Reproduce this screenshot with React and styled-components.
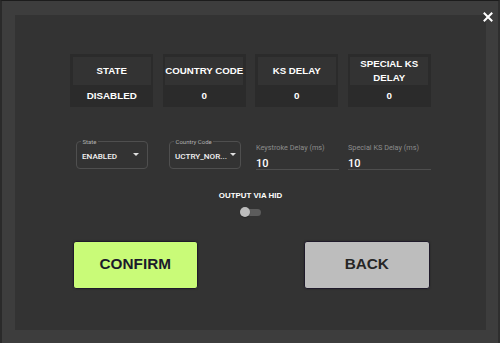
import styled, { createGlobalStyle } from "styled-components";

const Global = createGlobalStyle`
  html, body {
    margin: 0;
    padding: 0;
    background: #3c3c3c;
  }
  * { box-sizing: border-box; }
`;

const Modal = styled.div`
  position: relative;
  width: 500px;
  height: 343px;
  background: #3d3d3d;
  border-top: 1px solid #1c1c1c;
  border-left: 2px solid #2a2a2a;
  border-right: 2px solid #2e2e2e;
  padding: 14px 12px 13px 13px;
  font-family: "Liberation Sans", Arial, sans-serif;
`;

const CloseBtn = styled.div`
  position: absolute;
  top: 7px;
  right: 5px;
  width: 10px;
  height: 10px;
  cursor: pointer;
`;

const Panel = styled.div`
  background: #333333;
  width: 100%;
  height: 100%;
  display: flex;
  flex-direction: column;
  align-items: center;
  padding-top: 39px;
`;

const Table = styled.div`
  display: flex;
  gap: 9.5px;
`;

const Column = styled.div`
  width: 83px;
  height: 53px;
  background: #2b2b2b;
  padding: 2.5px 2.5px 0;
  display: flex;
  flex-direction: column;
`;

const HeadCell = styled.div`
  height: 28px;
  background: #333333;
  color: #ffffff;
  font-weight: bold;
  font-size: 9.7px;
  line-height: 14px;
  display: flex;
  align-items: center;
  justify-content: center;
  text-align: center;
  padding: 0 4px;
  white-space: ${p => (p.$wrap ? "normal" : "nowrap")};
`;

const ValueCell = styled.div`
  flex: 1;
  color: #ffffff;
  font-weight: bold;
  font-size: 9.8px;
  display: flex;
  align-items: center;
  justify-content: center;
  padding-bottom: 1px;
`;

const FormRow = styled.div`
  display: flex;
  margin-top: 33.5px;
  margin-left: 6px;
`;

const SelectBox = styled.div`
  position: relative;
  width: 72px;
  height: 28.6px;
  border: 1px solid #4f4f4f;
  border-radius: 4px;
  margin-right: ${p => p.$mr}px;
  display: flex;
  align-items: center;
  padding: 2px 8px 0 5px;
  font-family: Roboto, "Liberation Sans", sans-serif;
`;

const SelectLabel = styled.span`
  position: absolute;
  top: -4px;
  left: 4px;
  padding: 0 1.5px;
  background: #333333;
  color: #b0b0b0;
  font-size: 6px;
  line-height: 7px;
`;

const SelectValue = styled.span`
  flex: 1;
  color: #f2f2f2;
  font-size: 8.1px;
  font-weight: 500;
  white-space: nowrap;
`;

const Caret = styled.span`
  width: 0;
  height: 0;
  margin-left: 3px;
  margin-bottom: 3px;
  border-left: 3px solid transparent;
  border-right: 3px solid transparent;
  border-top: 3px solid #e0e0e0;
`;

const TextField = styled.div`
  width: 83px;
  height: 29px;
  margin-right: ${p => p.$mr}px;
  border-bottom: 1px solid #4e4e4e;
  display: flex;
  flex-direction: column;
  font-family: Roboto, "Liberation Sans", sans-serif;
  padding-top: 2px;
`;

const FieldLabel = styled.span`
  color: #8c8c8c;
  font-size: 7.3px;
  line-height: 9px;
  white-space: nowrap;
`;

const FieldValue = styled.span`
  color: #ffffff;
  font-size: 11px;
  font-weight: 500;
  line-height: 13px;
  margin-top: 5px;
`;

const HidLabel = styled.div`
  margin-top: 22.5px;
  color: #ffffff;
  font-weight: bold;
  font-size: 7.9px;
  line-height: 8px;
`;

const Switch = styled.div`
  position: relative;
  margin-top: 7px;
  width: 21px;
  height: 10px;
  display: flex;
  align-items: center;
`;

const Track = styled.div`
  width: 100%;
  height: 7px;
  border-radius: 4px;
  background: #5c5c5c;
`;

const Thumb = styled.div`
  position: absolute;
  left: 0;
  top: 0;
  width: 10px;
  height: 10px;
  border-radius: 50%;
  background: #bdbdbd;
  box-shadow: 0 1px 1px rgba(0,0,0,0.3);
`;

const Buttons = styled.div`
  display: flex;
  gap: 106px;
  margin-top: 23.5px;
  margin-left: 1px;
`;

const Button = styled.button`
  width: 125.5px;
  height: 48px;
  border: 1px solid #1f1a2a;
  border-radius: 3px;
  background: ${p => p.$bg};
  color: ${p => p.$fg};
  font-family: "Liberation Sans", Arial, sans-serif;
  font-size: 15.3px;
  font-weight: bold;
  box-shadow: 0 0 2px rgba(0,0,0,0.35);
  padding: 0 0 1px;
  cursor: pointer;
`;

const columns = [
  { title: "STATE", value: "DISABLED" },
  { title: "COUNTRY CODE", value: "0" },
  { title: "KS DELAY", value: "0" },
  { title: "SPECIAL KS DELAY", value: "0", wrap: true },
];

export default function App() {
  return (
    <>
      <Global />
      <Modal>
        <CloseBtn>
          <svg width="10" height="10" viewBox="0 0 10 10">
            <path d="M1.5 1.5 L8.5 8.5 M8.5 1.5 L1.5 8.5" stroke="#fff" strokeWidth="2" strokeLinecap="square" />
          </svg>
        </CloseBtn>
        <Panel>
          <Table>
            {columns.map(c => (
              <Column key={c.title}>
                <HeadCell $wrap={c.wrap}>{c.title}</HeadCell>
                <ValueCell>{c.value}</ValueCell>
              </Column>
            ))}
          </Table>
          <FormRow>
            <SelectBox $mr={21}>
              <SelectLabel>State</SelectLabel>
              <SelectValue>ENABLED</SelectValue>
              <Caret />
            </SelectBox>
            <SelectBox $mr={15}>
              <SelectLabel>Country Code</SelectLabel>
              <SelectValue>UCTRY_NOR...</SelectValue>
              <Caret />
            </SelectBox>
            <TextField $mr={9}>
              <FieldLabel>Keystroke Delay (ms)</FieldLabel>
              <FieldValue>10</FieldValue>
            </TextField>
            <TextField $mr={0}>
              <FieldLabel>Special KS Delay (ms)</FieldLabel>
              <FieldValue>10</FieldValue>
            </TextField>
          </FormRow>
          <HidLabel>OUTPUT VIA HID</HidLabel>
          <Switch>
            <Track />
            <Thumb />
          </Switch>
          <Buttons>
            <Button $bg="#c9fb78" $fg="#1b1a2b">CONFIRM</Button>
            <Button $bg="#bdbdbd" $fg="#262626">BACK</Button>
          </Buttons>
        </Panel>
      </Modal>
    </>
  );
}
